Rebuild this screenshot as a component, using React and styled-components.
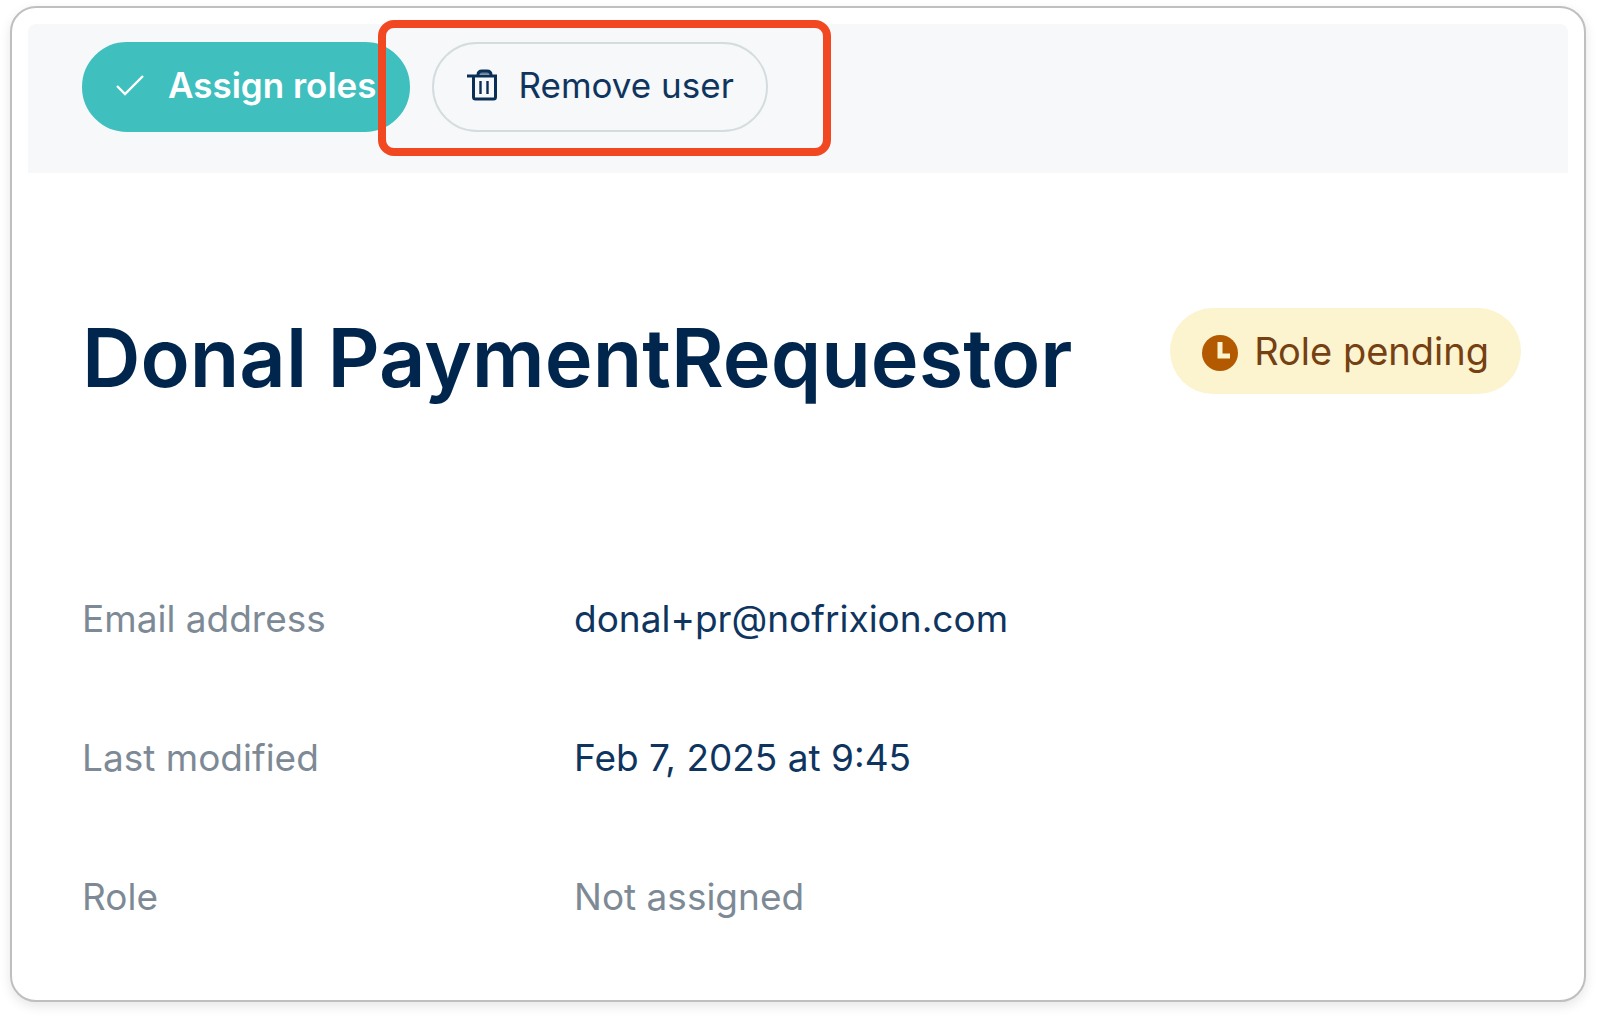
import React from "react";
import styled, { createGlobalStyle } from "styled-components";

const GlobalStyle = createGlobalStyle`
  *, *::before, *::after { box-sizing: border-box; }
  body {
    margin: 0;
    background: #ffffff;
    font-family: Inter, "Liberation Sans", sans-serif;
    color: #0f355f;
  }
`;

const Page = styled.main`
  min-height: 100vh;
  display: flex;
  padding: 6px 11px 14px 10px;
`;

const Card = styled.section`
  flex: 1;
  min-width: 0;
  padding: 16px;
  background: #ffffff;
  border: 2px solid #bfbfbf;
  border-radius: 26px;
  box-shadow: 0 4px 12px rgba(0, 0, 0, 0.1);
`;

const Toolbar = styled.div`
  display: flex;
  gap: 22px;
  padding: 18px 54px 41px;
  background: #f6f8fa;
  border-radius: 8px 8px 0 0;
`;

const PillButton = styled.button`
  display: flex;
  align-items: center;
  height: 90px;
  gap: ${(p) => (p.$primary ? 24 : 20)}px;
  padding: 0 32px 4px;
  font-family: inherit;
  font-size: 35px;
  font-weight: ${(p) => (p.$primary ? 600 : 400)};
  line-height: 44px;
  white-space: nowrap;
  color: ${(p) => (p.$primary ? "#ffffff" : "#0f355f")};
  background: ${(p) => (p.$primary ? "#40bfbf" : "transparent")};
  border: 2px solid ${(p) => (p.$primary ? "#40bfbf" : "#d5dcde")};
  border-radius: 45px;
  cursor: pointer;
`;

const Highlight = styled.div`
  position: relative;

  &::after {
    content: "";
    position: absolute;
    inset: -22px -63px -24px -54px;
    border: 8px solid #f24822;
    border-radius: 16px;
    pointer-events: none;
  }
`;

const Icon = styled.svg`
  flex: none;
  display: block;
`;

const Header = styled.header`
  display: flex;
  justify-content: space-between;
  align-items: flex-start;
  gap: 32px;
  padding: 135px 47px 0 54px;
`;

const Title = styled.h1`
  margin: 0;
  font-size: 81px;
  font-weight: 600;
  line-height: 100px;
  color: #00264d;
`;

const Badge = styled.span`
  flex: none;
  display: flex;
  align-items: center;
  gap: 16px;
  height: 86px;
  padding: 0 32px;
  font-size: 38px;
  line-height: 44px;
  color: #754012;
  background: #fcf3cf;
  border-radius: 43px;
`;

const Details = styled.dl`
  display: grid;
  grid-template-columns: 460px 1fr;
  column-gap: 32px;
  row-gap: 91px;
  margin: 0;
  padding: 187px 54px 0;
  font-size: 37px;
  line-height: 48px;
`;

const Label = styled.dt`
  color: #7d8a96;
`;

const Value = styled.dd`
  margin: 0;
  color: ${(p) => (p.$muted ? "#7d8a96" : "#0f355f")};
`;

const CheckIcon = () => (
  <Icon width="28" height="22" viewBox="0 0 28 22" fill="none" stroke="currentColor" strokeWidth="2.4" aria-hidden="true">
    <path d="M1 12l8 8L27 2" />
  </Icon>
);

const TrashIcon = () => (
  <Icon width="32" height="32" viewBox="0 0 32 32" fill="none" stroke="#0a2f57" aria-hidden="true">
    <path d="M1 7h30" strokeWidth="3" />
    <path d="M12 6q0-4 4-4h5q4 0 4 4" strokeWidth="3" />
    <path d="M13 4h11" strokeWidth="2" opacity="0.6" />
    <path d="M7.5 7v21q0 2 2 2h18q2 0 2-2V7" strokeWidth="3" />
    <path d="M14.5 12v13M21.5 12v13" strokeWidth="2.4" />
  </Icon>
);

const ClockIcon = () => (
  <Icon width="36" height="40" viewBox="0 0 36 40" aria-hidden="true">
    <circle cx="18" cy="22" r="18" fill="#b35900" />
    <path d="M18 11v14h10" fill="none" stroke="#fcf3cf" strokeWidth="5" />
  </Icon>
);

const details = [
  { label: "Email address", value: "donal+pr@nofrixion.com" },
  { label: "Last modified", value: "Feb 7, 2025 at 9:45" },
  { label: "Role", value: "Not assigned", muted: true },
];

export default function App() {
  return (
    <>
      <GlobalStyle />
      <Page>
        <Card>
          <Toolbar>
            <PillButton type="button" $primary>
              <CheckIcon />
              Assign roles
            </PillButton>
            <Highlight>
              <PillButton type="button">
                <TrashIcon />
                Remove user
              </PillButton>
            </Highlight>
          </Toolbar>
          <Header>
            <Title>Donal PaymentRequestor</Title>
            <Badge>
              <ClockIcon />
              Role pending
            </Badge>
          </Header>
          <Details>
            {details.map((d) => (
              <React.Fragment key={d.label}>
                <Label>{d.label}</Label>
                <Value $muted={d.muted}>{d.value}</Value>
              </React.Fragment>
            ))}
          </Details>
        </Card>
      </Page>
    </>
  );
}
